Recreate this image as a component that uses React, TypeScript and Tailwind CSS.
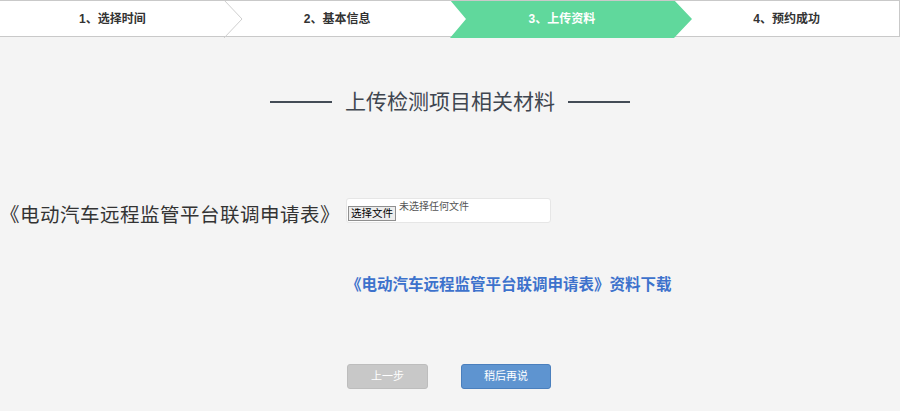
export default function App() {
  const steps = ["1、选择时间", "2、基本信息", "3、上传资料", "4、预约成功"];
  const font = { fontFamily: '"Liberation Sans", "Noto Sans CJK SC", sans-serif' };

  return (
    <div className="w-[900px] h-[411px] bg-[#f4f4f4] overflow-hidden" style={font}>
      {/* step bar */}
      <div className="relative h-[37px] bg-white border-t border-b border-r border-[#c9c9c9] flex">
        <svg className="absolute left-0 top-0" width="900" height="37" viewBox="0 0 900 37">
          <polygon points="450,-1 674,-1 692,18 674,37 450,37 466,18" fill="#60d89c" />
          <polyline points="224,-1 242,18 224,37" fill="none" stroke="#cfcfcf" strokeWidth="1" />
        </svg>
        {steps.map((s, i) => (
          <div
            key={s}
            className={`relative w-[225px] flex items-center justify-center text-[12px] font-bold ${
              i === 2 ? "text-white" : "text-[#333]"
            }`}
          >
            {s}
          </div>
        ))}
      </div>

      {/* title */}
      <div className="mt-[51px] flex items-center justify-center gap-[13px]">
        <span className="w-[62px] h-[2px] bg-[#444c56]" />
        <span className="text-[21px] leading-[28px] text-[#3f4650]">上传检测项目相关材料</span>
        <span className="w-[62px] h-[2px] bg-[#444c56]" />
      </div>

      {/* upload row */}
      <div className="mt-[76px] flex items-center gap-[6px]">
        <span className="text-[19.5px] leading-[28px] tracking-[0.5px] text-[#333] mt-[9px]">
          《电动汽车远程监管平台联调申请表》
        </span>
        <div className="w-[205px] h-[25px] bg-white border border-[#e6e6e6] rounded-[3px] flex items-start pl-[1px] pt-[1px]">
          <span className="mt-[6px] px-[2px] h-[15px] flex items-center bg-[#ededed] border border-[#8f8f8f] text-[10.5px] text-black leading-none">
            选择文件
          </span>
          <span className="ml-[3px] text-[10px] text-[#555] leading-none mt-[2px]">未选择任何文件</span>
        </div>
      </div>

      {/* download link */}
      <div className="mt-[44px] pl-[346px]">
        <span className="text-[15.5px] leading-[20px] font-bold text-[#3d72cc]">
          《电动汽车远程监管平台联调申请表》资料下载
        </span>
      </div>

      {/* buttons */}
      <div className="mt-[67px] pl-[347px] flex gap-[33px]">
        <button className="w-[81px] h-[25px] rounded-[3px] bg-[#c8c8c8] border border-[#bdbdbd] text-white text-[11px]">
          上一步
        </button>
        <button className="w-[90px] h-[25px] rounded-[3px] bg-[#5e94d0] border border-[#4a7fbd] text-white text-[11px]">
          稍后再说
        </button>
      </div>
    </div>
  );
}
